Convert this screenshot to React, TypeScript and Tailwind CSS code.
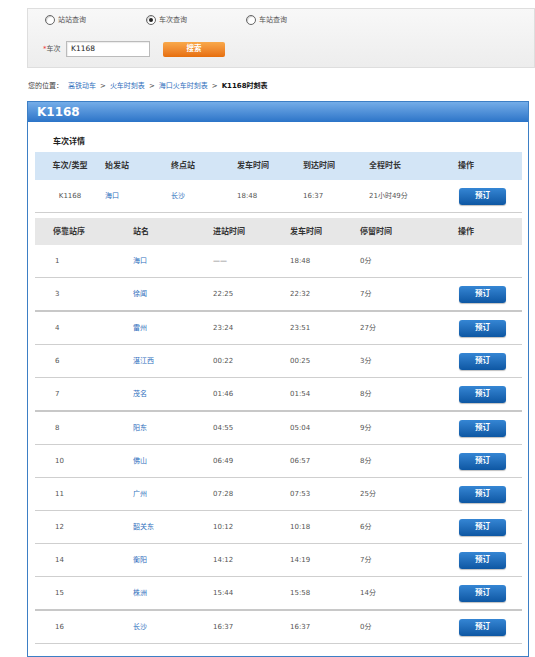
import React from 'react';

const FONT = "font-['DejaVu_Sans','Noto_Sans_CJK_SC',sans-serif]";

type Stop = { seq: string; name: string; arrive: string; depart: string; stay: string; book: boolean; thick?: boolean };

const stops: Stop[] = [
  { seq: '1', name: '海口', arrive: '——', depart: '18:48', stay: '0分', book: false },
  { seq: '3', name: '徐闻', arrive: '22:25', depart: '22:32', stay: '7分', book: true, thick: true },
  { seq: '4', name: '雷州', arrive: '23:24', depart: '23:51', stay: '27分', book: true },
  { seq: '6', name: '湛江西', arrive: '00:22', depart: '00:25', stay: '3分', book: true },
  { seq: '7', name: '茂名', arrive: '01:46', depart: '01:54', stay: '8分', book: true, thick: true },
  { seq: '8', name: '阳东', arrive: '04:55', depart: '05:04', stay: '9分', book: true },
  { seq: '10', name: '佛山', arrive: '06:49', depart: '06:57', stay: '8分', book: true },
  { seq: '11', name: '广州', arrive: '07:28', depart: '07:53', stay: '25分', book: true },
  { seq: '12', name: '韶关东', arrive: '10:12', depart: '10:18', stay: '6分', book: true },
  { seq: '14', name: '衡阳', arrive: '14:12', depart: '14:19', stay: '7分', book: true },
  { seq: '15', name: '株洲', arrive: '15:44', depart: '15:58', stay: '14分', book: true, thick: true },
  { seq: '16', name: '长沙', arrive: '16:37', depart: '16:37', stay: '0分', book: true },
];

const BookButton = () => (
  <button className="w-[47px] h-[17px] rounded-[3px] bg-gradient-to-b from-[#3586d4] to-[#0d57a3] text-white text-[7.5px] font-bold leading-none shadow-[0_1px_1px_rgba(0,0,0,0.25)]">
    预订
  </button>
);

const Radio = ({ checked, label }: { checked?: boolean; label: string }) => (
  <label className="flex items-center gap-[3px]">
    <span className="w-[10px] h-[10px] rounded-full border border-[#666] bg-white flex items-center justify-center shadow-[inset_1px_1px_1px_rgba(0,0,0,0.2)]">
      {checked && <span className="w-[4px] h-[4px] rounded-full bg-[#222]" />}
    </span>
    <span className="text-[7px] text-[#555]">{label}</span>
  </label>
);

export default function App() {
  return (
    <div className={`w-[535px] h-[657px] overflow-hidden bg-white ${FONT}`}>
      {/* search box */}
      <div className="ml-[27px] mt-[8px] h-[60px] border border-[#dedede] bg-gradient-to-b from-[#f8f8f8] to-[#ededed] pl-[17px]">
        <div className="flex items-center h-[10px] mt-[6px]">
          <div className="w-[101px]"><Radio label="站站查询" /></div>
          <div className="w-[100px]"><Radio checked label="车次查询" /></div>
          <div><Radio label="车站查询" /></div>
        </div>
        <div className="flex items-center mt-[16px] h-[16px]">
          <span className="text-[7px] text-[#555] w-[23px] ml-[-2px]"><span className="text-[#e33]">*</span>车次</span>
          <div className="w-[84px] h-[16px] border border-[#bbb] bg-white text-[7.5px] text-[#222] flex items-center pl-[4px] shadow-[inset_1px_1px_1px_rgba(0,0,0,0.08)]">K1168</div>
          <button className="ml-[13px] w-[62px] h-[15px] rounded-[2px] bg-gradient-to-b from-[#f9a94a] to-[#e66e0a] text-white text-[7.5px] font-bold leading-none">
            搜索
          </button>
        </div>
      </div>

      {/* breadcrumb */}
      <div className="ml-[28px] mt-[14px] h-[8px] leading-[8px] text-[7px] text-[#444] whitespace-nowrap">
        您的位置：
        <span className="ml-[5px] text-[#2f6fbd]">高铁动车</span>
        <span className="mx-[4px]">&gt;</span>
        <span className="text-[#2f6fbd]">火车时刻表</span>
        <span className="mx-[4px]">&gt;</span>
        <span className="text-[#2f6fbd]">海口火车时刻表</span>
        <span className="mx-[4px]">&gt;</span>
        <span className="font-bold text-[#111]">K1168时刻表</span>
      </div>

      {/* panel */}
      <div className="ml-[27px] mt-[11px] w-[502px] border border-[#3d7fc5] pb-[12px]">
        <div className="h-[20px] bg-gradient-to-b from-[#74ade8] to-[#2b74c8] flex items-center pl-[9px]">
          <span className="text-white font-bold text-[12px] leading-none">K1168</span>
        </div>

        <div className="pl-[7px] pr-[6px]">
          <div className="pt-[15px] h-[25px] leading-[10px] pl-[18px] text-[8px] font-bold text-[#222]">车次详情</div>

          {/* train summary */}
          <div className="mt-[5px] flex items-center h-[28px] bg-[#d3e5f6] text-[8px] font-bold text-[#333]">
            <div className="w-[70px] text-center">车次/类型</div>
            <div className="w-[66px]">始发站</div>
            <div className="w-[66px]">终点站</div>
            <div className="w-[66px]">发车时间</div>
            <div className="w-[66px]">到达时间</div>
            <div className="w-[89px]">全程时长</div>
            <div className="flex-1">操作</div>
          </div>
          <div className="flex items-center h-[33px] border-b border-[#cfcfcf] text-[7px] text-[#555]">
            <div className="w-[70px] text-center">K1168</div>
            <div className="w-[66px] text-[#2f6fbd]">海口</div>
            <div className="w-[66px] text-[#2f6fbd]">长沙</div>
            <div className="w-[66px]">18:48</div>
            <div className="w-[66px]">16:37</div>
            <div className="w-[89px]">21小时49分</div>
            <div className="flex-1 pl-[1px]"><BookButton /></div>
          </div>

          {/* stops */}
          <div className="mt-[5px] flex items-center h-[27px] bg-[#e7e7e7] text-[8px] font-bold text-[#333]">
            <div className="w-[98px] pl-[18px]">停靠站序</div>
            <div className="w-[80px]">站名</div>
            <div className="w-[77px]">进站时间</div>
            <div className="w-[70px]">发车时间</div>
            <div className="w-[98px]">停留时间</div>
            <div className="flex-1">操作</div>
          </div>
          {stops.map((s) => (
            <div
              key={s.seq}
              className={`flex items-center text-[7px] text-[#555] ${s.thick ? 'border-b-2 border-[#c8c8c8] h-[34px]' : 'border-b border-[#cfcfcf] h-[33px]'}`}
            >
              <div className="w-[98px] pl-[20px]">{s.seq}</div>
              <div className="w-[80px] text-[#2f6fbd]">{s.name}</div>
              <div className="w-[77px]">{s.arrive}</div>
              <div className="w-[70px]">{s.depart}</div>
              <div className="w-[98px]">{s.stay}</div>
              <div className="flex-1 pl-[1px]">{s.book && <BookButton />}</div>
            </div>
          ))}
        </div>
      </div>
    </div>
  );
}
